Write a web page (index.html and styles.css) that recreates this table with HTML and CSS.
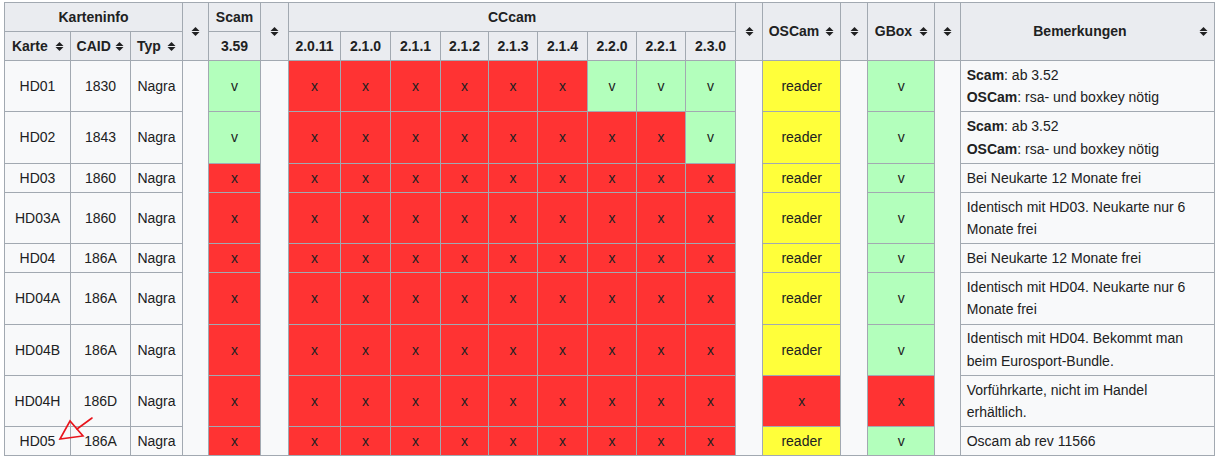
FILE: index.html
```html
<!DOCTYPE html>
<html lang="de">
<head>
<meta charset="utf-8">
<title>Karteninfo</title>
<link rel="stylesheet" href="styles.css">
</head>
<body>
<div class="page">
<table class="wikitable">
  <colgroup>
    <col class="w66"><col class="w60"><col class="w52">
    <col class="w26"><col class="w52"><col class="w28">
    <col class="w52"><col class="w50"><col class="w50"><col class="w48"><col class="w49"><col class="w50"><col class="w49"><col class="w49"><col class="w50">
    <col class="w27"><col class="w78"><col class="w27"><col class="w67"><col class="w26"><col class="w254">
  </colgroup>
  <thead>
    <tr>
      <th colspan="3">Karteninfo</th>
      <th rowspan="2" class="sort gaphead"></th>
      <th>Scam</th>
      <th rowspan="2" class="sort gaphead"></th>
      <th colspan="9">CCcam</th>
      <th rowspan="2" class="sort gaphead"></th>
      <th rowspan="2" class="sort">OSCam</th>
      <th rowspan="2" class="sort gaphead"></th>
      <th rowspan="2" class="sort">GBox</th>
      <th rowspan="2" class="sort gaphead"></th>
      <th rowspan="2" class="sort">Bemerkungen</th>
    </tr>
    <tr>
      <th class="sort">Karte</th>
      <th class="sort">CAID</th>
      <th class="sort">Typ</th>
      <th>3.59</th>
      <th>2.0.11</th><th>2.1.0</th><th>2.1.1</th><th>2.1.2</th><th>2.1.3</th><th>2.1.4</th><th>2.2.0</th><th>2.2.1</th><th>2.3.0</th>
    </tr>
  </thead>
  <tbody>
    <tr>
      <td>HD01</td><td>1830</td><td>Nagra</td>
      <td rowspan="9" class="gap"></td>
      <td class="yes">v</td>
      <td rowspan="9" class="gap"></td>
      <td class="no">x</td><td class="no">x</td><td class="no">x</td><td class="no">x</td><td class="no">x</td><td class="no">x</td><td class="yes">v</td><td class="yes">v</td><td class="yes">v</td>
      <td rowspan="9" class="gap"></td>
      <td class="part">reader</td>
      <td rowspan="9" class="gap"></td>
      <td class="yes">v</td>
      <td rowspan="9" class="gap"></td>
      <td class="note"><b>Scam</b>: ab 3.52<br><b>OSCam</b>: rsa- und boxkey nötig</td>
    </tr>
    <tr>
      <td>HD02</td><td>1843</td><td>Nagra</td>
      <td class="yes">v</td>
      <td class="no">x</td><td class="no">x</td><td class="no">x</td><td class="no">x</td><td class="no">x</td><td class="no">x</td><td class="no">x</td><td class="no">x</td><td class="yes">v</td>
      <td class="part">reader</td>
      <td class="yes">v</td>
      <td class="note"><b>Scam</b>: ab 3.52<br><b>OSCam</b>: rsa- und boxkey nötig</td>
    </tr>
    <tr>
      <td>HD03</td><td>1860</td><td>Nagra</td>
      <td class="no">x</td>
      <td class="no">x</td><td class="no">x</td><td class="no">x</td><td class="no">x</td><td class="no">x</td><td class="no">x</td><td class="no">x</td><td class="no">x</td><td class="no">x</td>
      <td class="part">reader</td>
      <td class="yes">v</td>
      <td class="note">Bei Neukarte 12 Monate frei</td>
    </tr>
    <tr>
      <td>HD03A</td><td>1860</td><td>Nagra</td>
      <td class="no">x</td>
      <td class="no">x</td><td class="no">x</td><td class="no">x</td><td class="no">x</td><td class="no">x</td><td class="no">x</td><td class="no">x</td><td class="no">x</td><td class="no">x</td>
      <td class="part">reader</td>
      <td class="yes">v</td>
      <td class="note">Identisch mit HD03. Neukarte nur 6 Monate frei</td>
    </tr>
    <tr>
      <td>HD04</td><td>186A</td><td>Nagra</td>
      <td class="no">x</td>
      <td class="no">x</td><td class="no">x</td><td class="no">x</td><td class="no">x</td><td class="no">x</td><td class="no">x</td><td class="no">x</td><td class="no">x</td><td class="no">x</td>
      <td class="part">reader</td>
      <td class="yes">v</td>
      <td class="note">Bei Neukarte 12 Monate frei</td>
    </tr>
    <tr>
      <td>HD04A</td><td>186A</td><td>Nagra</td>
      <td class="no">x</td>
      <td class="no">x</td><td class="no">x</td><td class="no">x</td><td class="no">x</td><td class="no">x</td><td class="no">x</td><td class="no">x</td><td class="no">x</td><td class="no">x</td>
      <td class="part">reader</td>
      <td class="yes">v</td>
      <td class="note">Identisch mit HD04. Neukarte nur 6 Monate frei</td>
    </tr>
    <tr>
      <td>HD04B</td><td>186A</td><td>Nagra</td>
      <td class="no">x</td>
      <td class="no">x</td><td class="no">x</td><td class="no">x</td><td class="no">x</td><td class="no">x</td><td class="no">x</td><td class="no">x</td><td class="no">x</td><td class="no">x</td>
      <td class="part">reader</td>
      <td class="yes">v</td>
      <td class="note">Identisch mit HD04. Bekommt man beim Eurosport-Bundle.</td>
    </tr>
    <tr>
      <td>HD04H</td><td>186D</td><td>Nagra</td>
      <td class="no">x</td>
      <td class="no">x</td><td class="no">x</td><td class="no">x</td><td class="no">x</td><td class="no">x</td><td class="no">x</td><td class="no">x</td><td class="no">x</td><td class="no">x</td>
      <td class="no">x</td>
      <td class="no">x</td>
      <td class="note">Vorführkarte, nicht im Handel erhältlich.</td>
    </tr>
    <tr>
      <td>HD05</td><td>186A</td><td>Nagra</td>
      <td class="no">x</td>
      <td class="no">x</td><td class="no">x</td><td class="no">x</td><td class="no">x</td><td class="no">x</td><td class="no">x</td><td class="no">x</td><td class="no">x</td><td class="no">x</td>
      <td class="part">reader</td>
      <td class="yes">v</td>
      <td class="note">Oscam ab rev 11566</td>
    </tr>
  </tbody>
</table>
<svg class="marker" width="45" height="34" viewBox="0 0 45 34" aria-hidden="true">
  <path d="M37 6 L22 17" fill="none" stroke="#e8141c" stroke-width="1.6" stroke-linecap="round"/>
  <path d="M5 27 L15 9 L28 24 Z" fill="none" stroke="#e8141c" stroke-width="1.6" stroke-linejoin="miter"/>
</svg>
</div>
</body>
</html>
```

FILE: styles.css
```css
html, body {
  margin: 0;
  padding: 0;
  background: #ffffff;
}

.page {
  position: relative;
  padding: 2px 0 0 4px;
}

.wikitable {
  table-layout: fixed;
  width: 1211px;
  border-collapse: collapse;
  border: 1px solid #a2a9b1;
  background: #f8f9fa;
  color: #202122;
  font-family: "Liberation Sans", Arial, sans-serif;
  font-size: 14px;
  line-height: 22.4px;
}

.wikitable th,
.wikitable td {
  border: 1px solid #a2a9b1;
  padding: 2.8px 5.6px;
  text-align: center;
  vertical-align: middle;
  overflow: hidden;
  white-space: nowrap;
}

.wikitable th {
  background-color: #eaecf0;
  font-weight: bold;
}

.wikitable th.sort {
  padding-right: 21px;
  background-image: url("data:image/svg+xml,%3Csvg xmlns='http://www.w3.org/2000/svg' width='21' height='9'%3E%3Cpath d='M6.5 4h8L10.5 0z M6.5 5h8l-4 4z' fill='%23202122'/%3E%3C/svg%3E");
  background-repeat: no-repeat;
  background-position: right center;
}

.wikitable th.gaphead {
  padding: 0;
  background-position: center center;
}

.wikitable td.gap {
  padding: 0;
}

.wikitable td.note {
  text-align: left;
  white-space: normal;
}

.wikitable td.yes { background: #b3ffbc; }
.wikitable td.no { background: #ff3333; }
.wikitable td.part { background: #ffff3a; }

col.w26 { width: 26px; }
col.w27 { width: 27px; }
col.w28 { width: 28px; }
col.w48 { width: 48px; }
col.w49 { width: 49px; }
col.w50 { width: 50px; }
col.w52 { width: 52px; }
col.w60 { width: 60px; }
col.w66 { width: 66px; }
col.w67 { width: 67px; }
col.w78 { width: 78px; }
col.w254 { width: 254px; }

.marker {
  position: absolute;
  left: 55px;
  top: 412px;
}
```
